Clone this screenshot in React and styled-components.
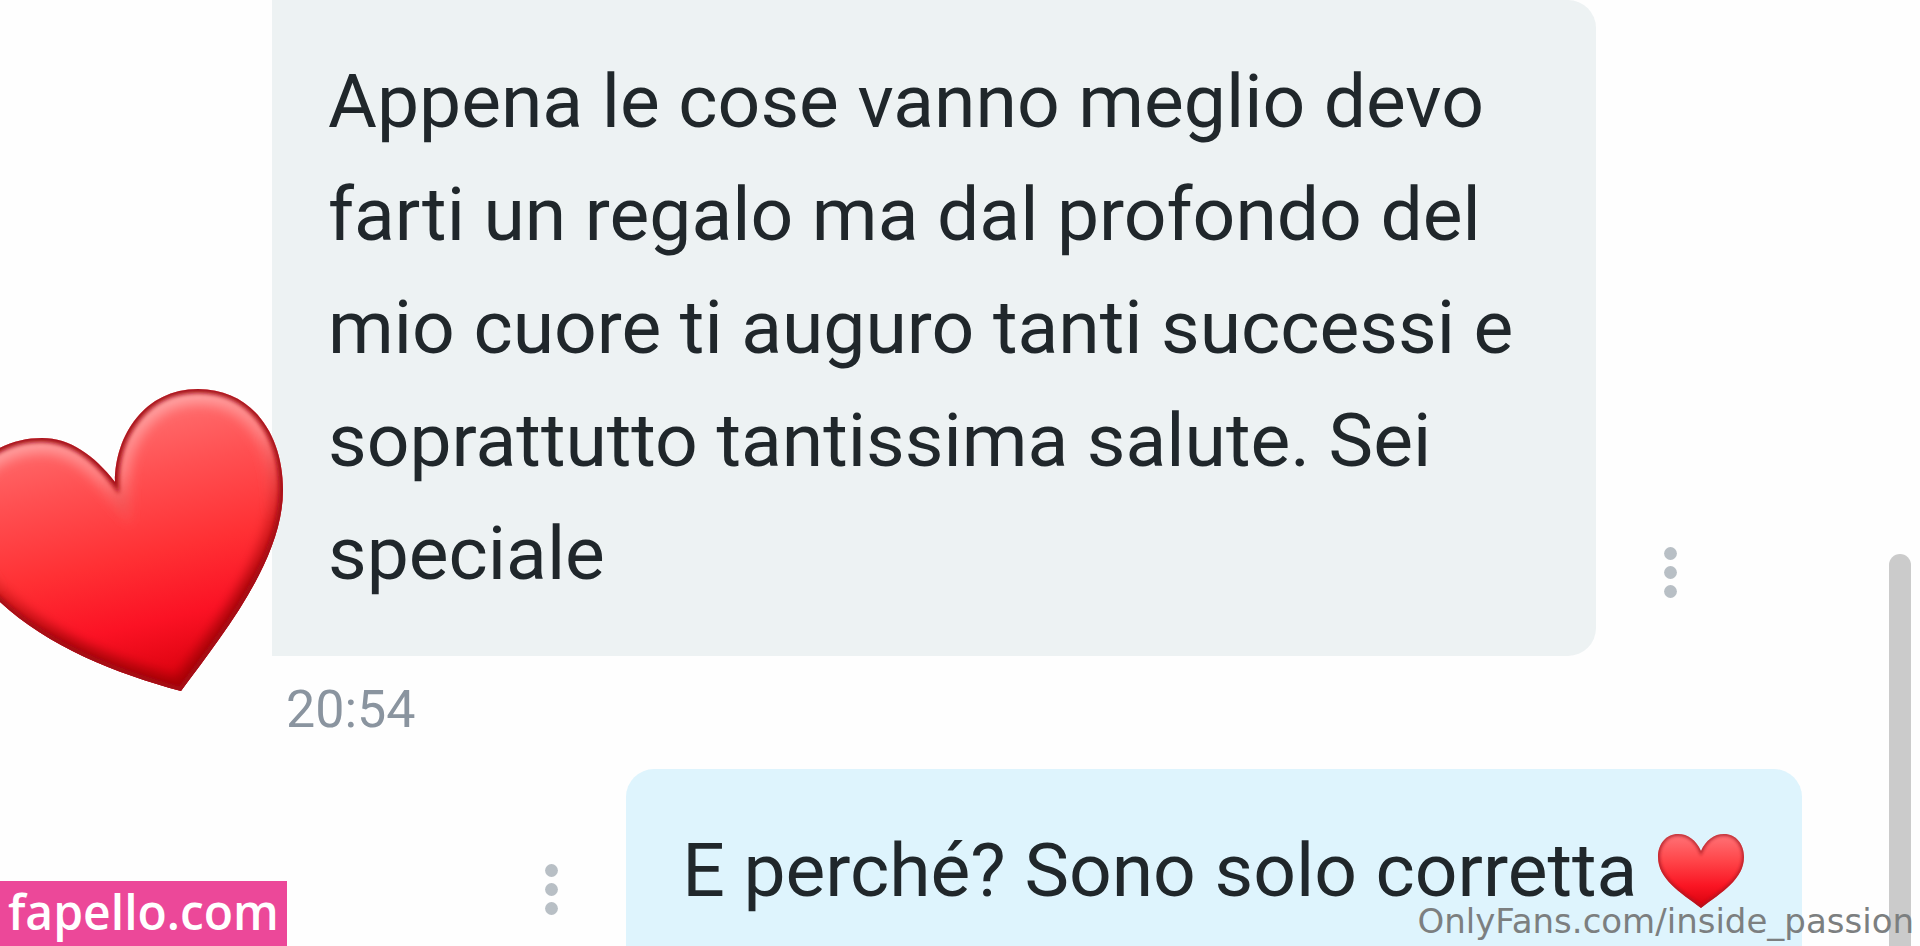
import React from "react";
import styled, { createGlobalStyle } from "styled-components";

const GlobalStyle = createGlobalStyle`
  * { box-sizing: border-box; }
  body { margin: 0; background: #fefefe; font-family: Roboto, sans-serif; }
`;

const Page = styled.main`
  position: relative;
  height: 100vh;
  overflow: hidden;
  background: #fefefe;
`;

const Thread = styled.section`
  display: flex;
  flex-direction: column;
  padding: 0 118px 0 272px;
`;

const MessageRow = styled.div`
  display: flex;
  align-items: flex-end;
  gap: 48px;
  justify-content: ${(p) => (p.$own ? "flex-end" : "flex-start")};
`;

const Bubble = styled.p`
  margin: 0;
  padding: 45px 56px 46px;
  max-width: 1324px;
  border-radius: ${(p) => (p.$own ? "28px 28px 0 28px" : "0 28px 28px 0")};
  background: ${(p) => (p.$own ? "#def4fd" : "#edf2f3")};
  color: #20272b;
  font-size: 75px;
  line-height: 113px;
`;

const MenuButton = styled.button`
  display: block;
  flex: none;
  margin: 0 0 38px;
  padding: 20px;
  border: 0;
  background: transparent;
  color: #b8bfc5;
  line-height: 0;
  cursor: pointer;
`;

const Time = styled.time`
  padding: 14px 14px 19px;
  color: #8a949f;
  font-size: 52px;
  line-height: 80px;
`;

const InlineHeart = styled.svg`
  width: 90px;
  height: 76px;
  vertical-align: -13px;
`;

const Sticker = styled.svg`
  position: absolute;
  top: 386px;
  left: 0;
  width: 286px;
  height: 308px;
`;

const ScrollThumb = styled.div`
  position: absolute;
  top: 554px;
  right: 9px;
  bottom: 0;
  width: 22px;
  border-radius: 11px 11px 0 0;
  background: #cbcbcb;
`;

const SiteBadge = styled.a`
  position: absolute;
  left: 0;
  bottom: 0;
  padding: 0 8px 4px;
  background: #ec4899;
  color: #fff;
  font: 600 48px/61px "Open Sans", sans-serif;
  text-decoration: none;
`;

const Credit = styled.a`
  position: absolute;
  right: 6px;
  bottom: 2px;
  color: #7c7f80;
  font: 34px/46px "DejaVu Sans", sans-serif;
  text-decoration: none;
`;

function Menu() {
  return (
    <MenuButton type="button" aria-label="Opzioni messaggio">
      <svg width="13" height="51" viewBox="0 0 13 51" fill="currentColor">
        <circle cx="6.5" cy="6.5" r="6.4" />
        <circle cx="6.5" cy="25.5" r="6.4" />
        <circle cx="6.5" cy="44.5" r="6.4" />
      </svg>
    </MenuButton>
  );
}

const smallHeart =
  "M44 18C39 7 31 1 21 1C9 1 1 11 1 24C1 46 23 59 44 75C65 59 87 46 87 24C87 11 79 1 67 1C57 1 49 7 44 18Z";
const bigHeart =
  "M115 96C115 49 145 3 198 3C252 3 283 48 283 104C283 174 223 248 181 305C117 288 47 260 0 216C-34 184 -54 150 -40 108C-27 70 8 52 42 52C70 52 94 69 115 96Z";

function SmallHeart() {
  return (
    <InlineHeart viewBox="-1 0 90 76" role="img" aria-label="cuore rosso">
      <defs>
        <linearGradient id="smallFill" x1="0" y1="0" x2="0" y2="1">
          <stop offset="0" stopColor="#ff7478" />
          <stop offset=".35" stopColor="#ff474b" />
          <stop offset=".7" stopColor="#fa1523" />
          <stop offset="1" stopColor="#d4000c" />
        </linearGradient>
        <clipPath id="smallClip"><path d={smallHeart} /></clipPath>
        <filter id="smallSoft"><feGaussianBlur stdDeviation="1.5" /></filter>
      </defs>
      <path d={smallHeart} fill="url(#smallFill)" />
      <g clipPath="url(#smallClip)">
        <path d={smallHeart} fill="none" stroke="#a41620" strokeWidth="4" opacity=".75" filter="url(#smallSoft)" />
      </g>
    </InlineHeart>
  );
}

function HeartSticker() {
  return (
    <Sticker viewBox="0 0 286 308" role="img" aria-label="cuore rosso">
      <defs>
        <linearGradient id="bigFill" gradientUnits="userSpaceOnUse" x1="100" y1="5" x2="170" y2="300">
          <stop offset="0" stopColor="#ff7a7a" />
          <stop offset=".3" stopColor="#ff5052" />
          <stop offset=".56" stopColor="#ff3034" />
          <stop offset=".78" stopColor="#fb1224" />
          <stop offset="1" stopColor="#d9000c" />
        </linearGradient>
        <linearGradient id="shine" gradientUnits="userSpaceOnUse" x1="100" y1="0" x2="145" y2="170">
          <stop offset="0" stopColor="#ffc0c0" stopOpacity=".8" />
          <stop offset=".5" stopColor="#ff9d9d" stopOpacity=".6" />
          <stop offset="1" stopColor="#ff6060" stopOpacity="0" />
        </linearGradient>
        <linearGradient id="shade" gradientUnits="userSpaceOnUse" x1="110" y1="90" x2="170" y2="290">
          <stop offset="0" stopColor="#a00008" stopOpacity="0" />
          <stop offset=".7" stopColor="#8d0007" stopOpacity=".7" />
          <stop offset="1" stopColor="#850006" stopOpacity=".6" />
        </linearGradient>
        <clipPath id="bigClip"><path d={bigHeart} /></clipPath>
        <filter id="bigSoft" x="-20%" y="-20%" width="140%" height="140%"><feGaussianBlur stdDeviation="6" /></filter>
        <filter id="edgeSoft" x="-20%" y="-20%" width="140%" height="140%"><feGaussianBlur stdDeviation="2" /></filter>
      </defs>
      <path d={bigHeart} fill="url(#bigFill)" />
      <g clipPath="url(#bigClip)" fill="none">
        <path d={bigHeart} stroke="url(#shine)" strokeWidth="30" filter="url(#bigSoft)" />
        <path d={bigHeart} stroke="url(#shade)" strokeWidth="24" filter="url(#bigSoft)" />
        <path d={bigHeart} stroke="#a50a13" strokeWidth="8" filter="url(#edgeSoft)" />
      </g>
    </Sticker>
  );
}

export default function App() {
  return (
    <>
      <GlobalStyle />
      <Page>
        <Thread>
          <MessageRow>
            <Bubble>
              Appena le cose vanno meglio devo farti un regalo ma dal profondo
              del mio cuore ti auguro tanti successi e soprattutto tantissima
              salute. Sei speciale
            </Bubble>
            <Menu />
          </MessageRow>
          <Time dateTime="20:54">20:54</Time>
          <MessageRow $own>
            <Menu />
            <Bubble $own>
              E perché? Sono solo corretta <SmallHeart />
            </Bubble>
          </MessageRow>
        </Thread>
        <HeartSticker />
        <ScrollThumb />
        <SiteBadge href="#fapello">fapello.com</SiteBadge>
        <Credit href="#profile">OnlyFans.com/inside_passion</Credit>
      </Page>
    </>
  );
}
